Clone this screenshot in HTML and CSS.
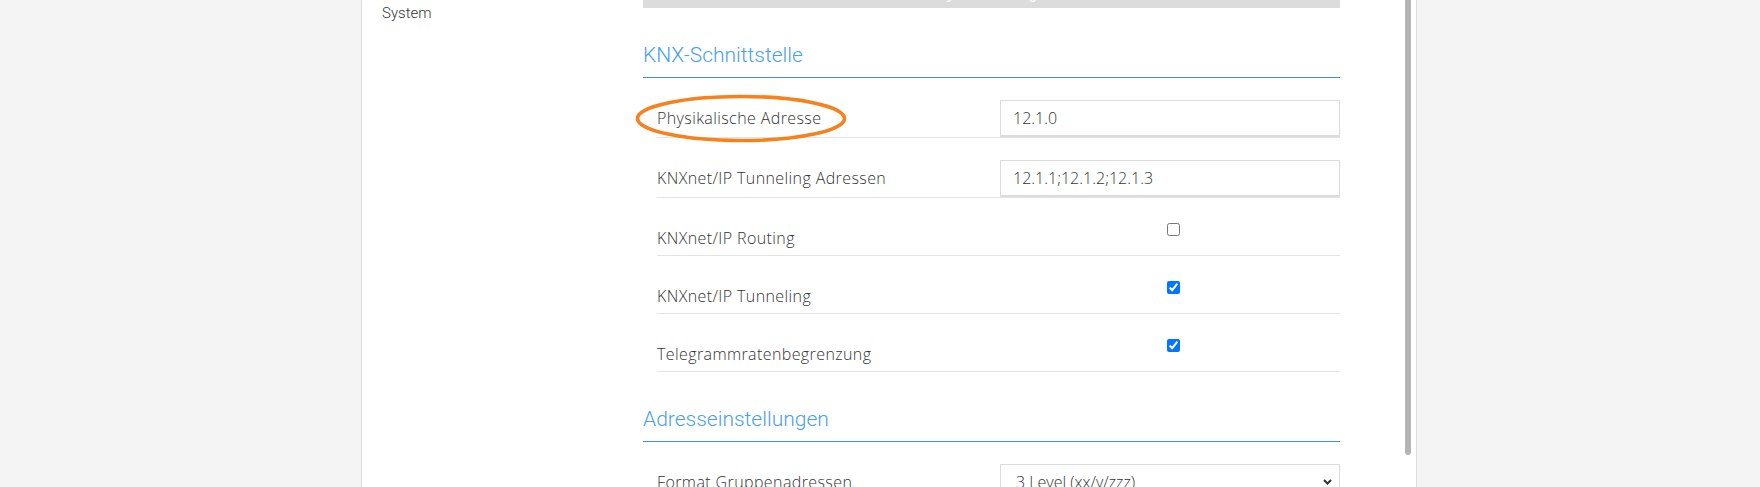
FILE: index.html
```html
<!DOCTYPE html>
<html lang="de">
<head>
<meta charset="utf-8">
<title>KNX-Schnittstelle</title>
<link rel="stylesheet" href="styles.css">
</head>
<body>
<div class="page">
  <div class="panel">
    <nav class="nav">
      <div class="nav-item">System</div>
    </nav>
    <main class="main">
      <div class="topbar"><span>Systemanzeige</span></div>

      <section class="group">
        <h2 class="group-title">KNX-Schnittstelle</h2>
        <div class="row row-input">
          <div class="row-label">Physikalische Adresse</div>
          <div class="field">12.1.0</div>
        </div>
        <div class="row row-input">
          <div class="row-label">KNXnet/IP Tunneling Adressen</div>
          <div class="field">12.1.1;12.1.2;12.1.3</div>
        </div>
        <div class="row row-check">
          <div class="row-label">KNXnet/IP Routing</div>
          <input class="check" type="checkbox">
        </div>
        <div class="row row-check">
          <div class="row-label">KNXnet/IP Tunneling</div>
          <input class="check" type="checkbox" checked>
        </div>
        <div class="row row-check">
          <div class="row-label">Telegrammratenbegrenzung</div>
          <input class="check" type="checkbox" checked>
        </div>
      </section>

      <section class="group">
        <h2 class="group-title">Adresseinstellungen</h2>
        <div class="row row-input">
          <div class="row-label">Format Gruppenadressen</div>
          <div class="field select">
            <span>3 Level (xx/y/zzz)</span>
            <svg class="chevron" width="9" height="6" viewBox="0 0 9 6"><path d="M1 1 L4.5 4.5 L8 1" fill="none" stroke="#333" stroke-width="2"/></svg>
          </div>
        </div>
      </section>
    </main>

    <div class="scroll-thumb"></div>
    <svg class="annot" width="212" height="49" viewBox="0 0 212 49"><ellipse cx="106" cy="24.5" rx="103.5" ry="22" fill="none" stroke="#f5821f" stroke-width="3.6"/></svg>
  </div>
</div>
</body>
</html>
```
FILE: styles.css
```css
* { box-sizing: border-box; }

html, body {
  margin: 0;
  height: 487px;
  overflow: hidden;
}

body {
  background: #f4f4f4;
  font-family: Roboto, "Open Sans", sans-serif;
  color: #333;
}

.page {
  padding-left: 361px;
  height: 487px;
}

.panel {
  position: relative;
  width: 1056px;
  height: 487px;
  background: #fff;
  border-left: 1px solid #dcdcdc;
  border-right: 1px solid #dcdcdc;
  display: flex;
  overflow: hidden;
}

.nav {
  width: 281px;
  flex: none;
  padding: 3px 0 0 20px;
}

.nav-item {
  font-size: 15px;
  line-height: 20px;
  font-weight: 300;
}

.main {
  width: 697px;
  flex: none;
}

.topbar {
  height: 8px;
  background: #dcdcdc;
  overflow: hidden;
  display: flex;
  justify-content: center;
  align-items: flex-end;
  color: #fff;
}

.topbar span {
  font-size: 16px;
  line-height: 20px;
  margin-bottom: 4px;
  flex: none;
}

.group-title {
  margin: 35px 0 0;
  font-size: 21px;
  line-height: 25px;
  font-weight: 300;
  color: #4aa0ee;
  padding-bottom: 9px;
  border-bottom: 1px solid #3d8fe0;
}

.row {
  display: grid;
  grid-template-columns: 343px 340px;
  margin-left: 14px;
  border-bottom: 1px solid #e3e3e3;
}

.row-input {
  padding-top: 22px;
  height: 60px;
}

.row-check {
  height: 58px;
}

.row-label {
  align-self: end;
  font-family: "Open Sans", Roboto, sans-serif;
  font-size: 16px;
  letter-spacing: 0.4px;
  line-height: 20px;
  font-weight: 300;
  padding-bottom: 9px;
  white-space: nowrap;
}

.row-check .row-label {
  padding-bottom: 7px;
}

.field {
  height: 37px;
  border: 1px solid #dcdcdc;
  border-bottom-width: 2px;
  padding: 0 12px;
  font-family: "Open Sans", Roboto, sans-serif;
  font-size: 16px;
  letter-spacing: 0;
  line-height: 34px;
  font-weight: 300;
  color: #333;
}

.select {
  display: flex;
  justify-content: space-between;
  align-items: center;
  padding: 0 7px 0 15px;
}

.check {
  align-self: start;
  justify-self: start;
  margin: 25px 0 0 167px;
  width: 13px;
  height: 13px;
}

.scroll-thumb {
  position: absolute;
  top: 0;
  right: 5px;
  width: 6px;
  height: 455px;
  background: #b4b4b4;
  border-radius: 0 0 3px 3px;
}

.annot {
  position: absolute;
  left: 273px;
  top: 94px;
}
```
